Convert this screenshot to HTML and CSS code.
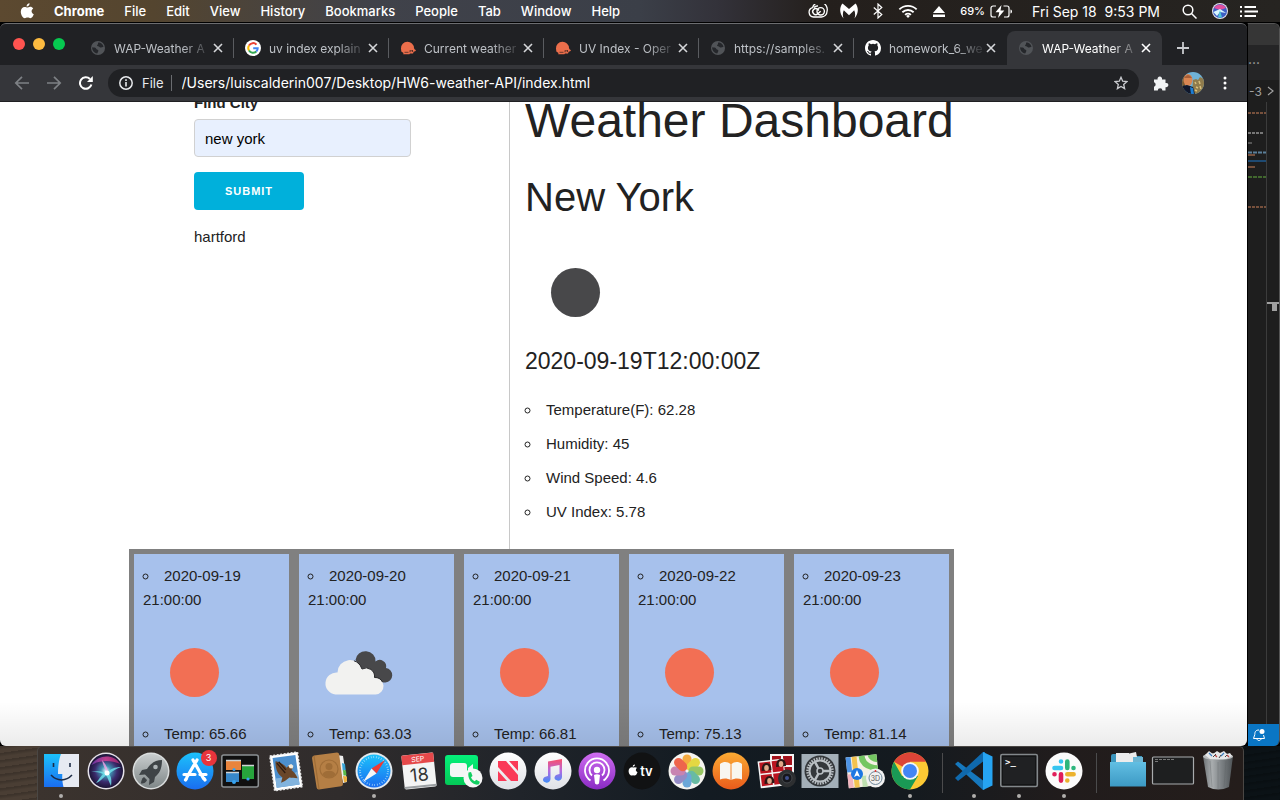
FILE: index.html
```html
<!DOCTYPE html>
<html lang="en">
<head>
<meta charset="utf-8">
<title>WAP-Weather App</title>
<link rel="stylesheet" href="styles.css">
</head>
<body>
<svg class="defs" aria-hidden="true">
  <defs>
    <symbol id="globe" viewBox="0 0 16 16"><circle cx="8" cy="8" r="7" fill="#515458"/><path d="M2.200 7.200c2 .3 3.600 0 4 1.600.3 1 1.300.8 2 1.500.6.700-.3 1.700-1 3.200C4 13 1.800 10 2.200 7.200zM8.200 2.500c-.5 1 .2 1.500-.7 2.200-.8.600-.5 1.500.5 1.500 1.500 0 1.600 1.300 3 1.400 1 0 1.500-.8 2.500-.4C13.300 4.600 11 2.500 8.200 2.500z" fill="#25272b"/></symbol>
    <symbol id="owm" viewBox="0 0 16 14"><path d="M1 7.500A6.500 6.500 0 0 1 14 7c.3 1.300 1 1.700 2 2.300-.5 1-1.300 1.300-2.200 1.200L13 12.500H10l-.6.700H3.200L3.500 12 1.300 10.600z" fill="#eb6e4b"/><path d="M10 9.800h3M10 9.300v2M4.500 11.300h4M12.500 9v2" stroke="#4a2a24" stroke-width=".8"/></symbol>
    <symbol id="close" viewBox="0 0 10 10"><path d="M1 1l8 8M9 1l-8 8" stroke="currentColor" stroke-width="1.600"/></symbol>
    <symbol id="sun" viewBox="0 0 100 100"><circle cx="51.500" cy="50.500" r="24.500" fill="#f26f54"/></symbol>
    <symbol id="moon" viewBox="0 0 100 100"><circle cx="50.500" cy="50.500" r="24.500" fill="#48484a"/></symbol>
    <clipPath id="darkCloud"><path d="M44 36A10 10 0 0 1 66 37 7 7 0 0 1 76.500 44.500 7.300 7.300 0 0 1 76 59.500L50 62z"/></clipPath>
    <symbol id="clouds" viewBox="-1.500 -1 100 100">
      <path d="M46 37A10 9.500 0 0 1 66 38.500 6.500 6.500 0 0 1 76.500 45 7.300 7.300 0 0 1 76 59.500H60z" fill="#48484a"/>
      <path d="M26 71.500A11 11 0 0 1 28 49.500 12.500 12.500 0 0 1 52.500 46 8.500 8.500 0 0 1 65 54.500 8.500 8.500 0 0 1 66 71.500z" fill="#f2f2f0"/>
      <path d="M28 49.500A12.500 12.500 0 0 1 52.500 46 8.500 8.500 0 0 1 65 54.500 8.500 8.500 0 0 1 73 59" fill="none" stroke="#29292b" clip-path="url(#darkCloud)"/>
    </symbol>
    <linearGradient id="gBlue" x2="0" y2="1"><stop stop-color="#1cc2fb"/><stop offset="1" stop-color="#1a6df0"/></linearGradient>
    <linearGradient id="gSilver" x2="0" y2="1"><stop stop-color="#c9cdce"/><stop offset="1" stop-color="#7f8788"/></linearGradient>
    <linearGradient id="gGreen" x2="0" y2="1"><stop stop-color="#05f07a"/><stop offset="1" stop-color="#04c957"/></linearGradient>
    <linearGradient id="gWhite" x2="0" y2="1"><stop stop-color="#ffffff"/><stop offset="1" stop-color="#dfe1e6"/></linearGradient>
    <linearGradient id="gPurple" x2="0" y2="1"><stop stop-color="#cf6df0"/><stop offset="1" stop-color="#8a2bc4"/></linearGradient>
    <linearGradient id="gOrange" x2="0" y2="1"><stop stop-color="#fbab33"/><stop offset="1" stop-color="#ea5b1b"/></linearGradient>
    <linearGradient id="gMusic" x2="0" y2="1"><stop stop-color="#fb4f68"/><stop offset="0.500" stop-color="#b56ae0"/><stop offset="1" stop-color="#3f8cf7"/></linearGradient>
    <linearGradient id="gFolder" x2="0" y2="1"><stop stop-color="#62bfe3"/><stop offset="1" stop-color="#3c99c4"/></linearGradient>
    <linearGradient id="gTrash"><stop stop-color="#6d7275"/><stop offset="0.300" stop-color="#a9adaf"/><stop offset="0.600" stop-color="#7e8386"/><stop offset="1" stop-color="#4f5457"/></linearGradient>
    <radialGradient id="gSiri"><stop stop-color="#dffcff"/><stop offset="0.300" stop-color="#3f8fb0"/><stop offset="0.650" stop-color="#3b2a6c"/><stop offset="1" stop-color="#1b1436"/></radialGradient>
    <linearGradient id="gSiriPink"><stop stop-color="#7a3fc0"/><stop offset="0.500" stop-color="#e8459a"/><stop offset="1" stop-color="#b02a78"/></linearGradient>
  </defs>
</svg>

<header class="menubar">
  <nav class="menus">
    <svg class="apple" viewBox="0 0 14 16" width="14" height="16"><path d="M9.600.3c.1 1.800-1.400 3.300-3 3.200C6.400 1.900 8 .4 9.600.3zM7.300 4.600c.7 0 1.600-.8 2.900-.8 1.100 0 2.300.6 3 1.700-2.400 1.500-2 4.700.6 5.700-.6 1.700-1.900 4-3.400 4-1 0-1.500-.7-2.800-.7s-1.800.7-2.800.7C3 15.200.8 11.800.8 8.700c0-3 1.900-4.700 3.800-4.700 1.200 0 2.100.6 2.700.6z" fill="#fff"/></svg>
    <button class="menu menu-app">Chrome</button>
    <button class="menu">File</button>
    <button class="menu">Edit</button>
    <button class="menu">View</button>
    <button class="menu">History</button>
    <button class="menu">Bookmarks</button>
    <button class="menu">People</button>
    <button class="menu">Tab</button>
    <button class="menu">Window</button>
    <button class="menu">Help</button>
  </nav>
  <div class="status">
    <svg width="20" height="14" viewBox="0 0 20 14" fill="none" stroke="#fff"><path d="M5.500 13A4.800 4.800 0 0 1 4.600 3.600 7 7 0 0 1 19 7.500a5.500 5.500 0 0 1-5.500 5.500z" stroke-width="1.300"/><circle cx="12.700" cy="7.300" r="3.700" stroke-width="1.400"/><path d="M12.700 7.300L9.800 9.800a3 3 0 1 1 0-4.400l1.200 1M6 3.500a4.500 4.500 0 0 1 4-1.500" stroke-width="1.400"/></svg>
    <svg width="18" height="16" viewBox="0 0 18 16"><path d="M2.500.5L9 6l6.500-5.500C18.500 4 19 10 14.500 15.500c1-3.500.8-6-.3-8.200L9 12.200 3.800 7.300C2.700 9.500 2.500 12 3.500 15.500-1 10-.5 4 2.500.5z" fill="#fff"/></svg>
    <svg width="10" height="16" viewBox="0 0 10 16"><path d="M.8 4.500l8 7L5 15V1l3.800 3.500-8 7" fill="none" stroke="#fff" stroke-width="1.200"/></svg>
    <svg width="20" height="15" viewBox="0 0 22 15" fill="none" stroke="#fff" stroke-width="2"><path d="M1.500 5.200a13.500 13.500 0 0 1 19 0M4.800 8.300a9 9 0 0 1 12.400 0M7.800 11.200a4.700 4.700 0 0 1 6.400 0"/><path d="M8.900 12.400L11 14.600l2.100-2.200a3 3 0 0 0-4.200 0z" fill="#fff" stroke="none"/></svg>
    <svg width="12" height="11" viewBox="0 0 12 11"><path d="M6 0l6 7H0zM0 8.500h12V11H0z" fill="#fff"/></svg>
    <span class="battery">69%
      <svg width="23" height="13" viewBox="0 0 23 13"><path d="M6 1H3a2 2 0 0 0-2 2v7a2 2 0 0 0 2 2h3M13.500 1H17a2 2 0 0 1 2 2v7a2 2 0 0 1-2 2h-3" fill="none" stroke="#fff" stroke-width="1.200"/><path d="M11.500 0L5.500 7.300h3.800L8 13l6.300-7.500h-3.800zM20.500 4.500c2 .5 2 3.500 0 4z" fill="#fff"/></svg>
    </span>
    <span class="clock">Fri Sep 18&nbsp; 9:53 PM</span>
    <svg width="15" height="15" viewBox="0 0 15 15" fill="none" stroke="#fff" stroke-width="1.500"><circle cx="6" cy="6" r="4.800"/><path d="M9.500 9.500l5 5"/></svg>
    <svg width="16" height="16" viewBox="0 0 16 16"><circle cx="8" cy="8" r="8" fill="#e8e4ee"/><circle cx="8" cy="8" r="7" fill="#3d5fc4"/><path d="M2 5a7 7 0 0 1 12 0L8 7z" fill="#e04fa0"/><path d="M1.300 9L8 6l6 4-6-1-3 4z" fill="#d8f6ff"/><path d="M8 7l2 7.500H6z" fill="#4ec5d8"/></svg>
    <svg width="18" height="11" viewBox="0 0 18 11"><path d="M4.500 1H16M4.500 5.500H18M4.500 10H16M0 1h2M0 5.500h2M0 10h2" stroke="#fff" stroke-width="2"/></svg>
  </div>
</header>

<div class="workspace">
  <section class="browser">
    <div class="tabstrip">
      <div class="lights"><span class="light red"></span><span class="light yellow"></span><span class="light green"></span></div>
      <div class="tab"><svg class="fav"><use href="#globe"/></svg><span class="tab-title">WAP-Weather A</span><button class="tab-close" aria-label="Close"><svg width="10" height="10"><use href="#close"/></svg></button></div>
      <div class="tab"><svg class="fav" viewBox="0 0 16 16"><circle cx="8" cy="8" r="8" fill="#fff"/><g fill="none" stroke-width="2"><path d="M11.500 4.600A4.700 4.700 0 0 0 4 5.500" stroke="#ea4335"/><path d="M4 5.500a4.700 4.700 0 0 0 0 5" stroke="#fbbc05"/><path d="M4 10.500a4.700 4.700 0 0 0 7.300 1" stroke="#34a853"/><path d="M11.300 11.500A4.700 4.700 0 0 0 12.700 8.200H8.200" stroke="#4285f4"/></g></svg><span class="tab-title">uv index explain</span><button class="tab-close" aria-label="Close"><svg width="10" height="10"><use href="#close"/></svg></button></div>
      <div class="tab"><svg class="fav"><use href="#owm"/></svg><span class="tab-title">Current weather</span><button class="tab-close" aria-label="Close"><svg width="10" height="10"><use href="#close"/></svg></button></div>
      <div class="tab"><svg class="fav"><use href="#owm"/></svg><span class="tab-title">UV Index - Oper</span><button class="tab-close" aria-label="Close"><svg width="10" height="10"><use href="#close"/></svg></button></div>
      <div class="tab"><svg class="fav"><use href="#globe"/></svg><span class="tab-title">https://samples.</span><button class="tab-close" aria-label="Close"><svg width="10" height="10"><use href="#close"/></svg></button></div>
      <div class="tab tab-last"><svg class="fav" viewBox="0 0 16 16"><path d="M8 0C3.580 0 0 3.580 0 8c0 3.540 2.290 6.530 5.470 7.590.4.070.55-.17.55-.38 0-.19-.01-.82-.01-1.490-2.010.37-2.530-.49-2.690-.94-.09-.23-.48-.94-.82-1.130-.28-.15-.68-.52-.01-.53.63-.01 1.080.58 1.230.82.72 1.210 1.870.87 2.330.66.07-.52.28-.87.51-1.070-1.780-.2-3.640-.89-3.640-3.950 0-.87.31-1.590.82-2.150-.08-.2-.36-1.020.08-2.120 0 0 .67-.21 2.200.82a7.420 7.420 0 0 1 4 0c1.530-1.040 2.200-.82 2.200-.82.44 1.100.16 1.920.08 2.120.51.56.82 1.270.82 2.150 0 3.070-1.870 3.750-3.650 3.950.29.25.54.73.54 1.480 0 1.070-.01 1.930-.01 2.200 0 .21.15.46.55.38A8.010 8.010 0 0 0 16 8c0-4.420-3.580-8-8-8z" fill="#fff"/></svg><span class="tab-title">homework_6_we</span><button class="tab-close" aria-label="Close"><svg width="10" height="10"><use href="#close"/></svg></button></div>
      <div class="tab tab-active"><svg class="fav"><use href="#globe"/></svg><span class="tab-title">WAP-Weather A</span><button class="tab-close" aria-label="Close"><svg width="10" height="10"><use href="#close"/></svg></button></div>
      <button class="newtab" aria-label="New tab"><svg width="12" height="12" viewBox="0 0 12 12"><path d="M6 0v12M0 6h12" stroke="#c9cbcf" stroke-width="1.800"/></svg></button>
    </div>
    <div class="toolbar">
      <button class="tool" aria-label="Back"><svg width="16" height="14" viewBox="0 0 16 14"><path d="M15 7H2M8 .8L1.800 7 8 13.200" fill="none" stroke="#7e8185" stroke-width="1.700"/></svg></button>
      <button class="tool" aria-label="Forward"><svg width="16" height="14" viewBox="0 0 16 14"><path d="M1 7h13M8 .8L14.200 7 8 13.200" fill="none" stroke="#7e8185" stroke-width="1.700"/></svg></button>
      <button class="tool" aria-label="Reload"><svg width="16" height="14" viewBox="-1 0 16 14"><path d="M12.400 8.500A5.800 5.800 0 1 1 11 3" fill="none" stroke="#fff" stroke-width="2"/><path d="M13.800 0v6H8z" fill="#fff"/></svg></button>
      <div class="omnibox">
        <svg width="14" height="14" viewBox="0 0 14 14"><circle cx="7" cy="7" r="6.200" fill="none" stroke="#e8eaed" stroke-width="1.500"/><path d="M7 6v4.500M7 3.300V5" stroke="#e8eaed" stroke-width="1.600"/></svg>
        <label class="scheme" for="address">File</label>
        <input class="address" id="address" type="text" value="/Users/luiscalderin007/Desktop/HW6-weather-API/index.html">
        <svg width="14" height="14" viewBox="0 0 14 14"><path d="M7 1.300l1.700 3.900 4.200.4-3.200 2.800.9 4.200L7 10.400l-3.600 2.200.9-4.200L1.100 5.600l4.200-.4z" fill="none" stroke="#c9cbcf" stroke-width="1.300"/></svg>
      </div>
      <svg class="puzzle" width="16" height="16" viewBox="0 0 16 16"><path d="M1 4.500h3.600a2.300 2.300 0 1 1 4.400 0h3.500V8a2.200 2.200 0 1 1 0 4.200V15.500H9.400a2.300 2.300 0 0 0-4.600 0H1v-3.800a2.300 2.300 0 0 0 0-4.400z" fill="#f1f3f4"/></svg>
      <svg class="avatar" width="22" height="22" viewBox="0 0 22 22"><clipPath id="av"><circle cx="11" cy="11" r="11"/></clipPath><g clip-path="url(#av)"><path d="M0 0h22v22H0z" fill="#6fb2d6"/><path d="M11 8l3-1 2 1 2-3 4 2v15H10z" fill="#8f7b4c"/><path d="M13 10l1 2M17 9l1 3M14 15l2 1M18 14l1 3M13 18l2 1" stroke="#d9c07c" stroke-width="1.500" fill="none"/><path d="M0 2h3v20H0z" fill="#7a5a30"/><ellipse cx="6" cy="8" rx="4.500" ry="6" fill="#d88552"/><path d="M2 6q4-6 8 0" fill="#a85f38"/><path d="M0 14l5-1 6 2 2 7H0z" fill="#10172b"/><path d="M8 15l3 1 1 6H9z" fill="#1e7ed2"/></g></svg>
      <svg class="kebab" width="4" height="14" viewBox="0 0 4 14"><circle cx="2" cy="2" r="1.500" fill="#fff"/><circle cx="2" cy="7" r="1.500" fill="#fff"/><circle cx="2" cy="12" r="1.500" fill="#fff"/></svg>
    </div>
    <main class="viewport">
      <div class="columns">
        <form class="search">
          <label class="search-label" for="city">Find City</label>
          <input class="search-input" id="city" type="text" value="new york">
          <button class="search-submit" type="button">SUBMIT</button>
          <div class="history">hartford</div>
        </form>
        <section class="current">
          <h1 class="title">Weather Dashboard</h1>
          <h2 class="city">New York</h2>
          <svg class="weather-icon current-icon"><use href="#moon"/></svg>
          <h4 class="date">2020-09-19T12:00:00Z</h4>
          <ul class="facts">
            <li>Temperature(F): 62.28</li>
            <li>Humidity: 45</li>
            <li>Wind Speed: 4.6</li>
            <li>UV Index: 5.78</li>
          </ul>
        </section>
      </div>
      <section class="forecast">
        <ul class="day"><li>2020-09-19 21:00:00</li><svg class="weather-icon"><use href="#sun"/></svg><li>Temp: 65.66</li></ul>
        <ul class="day"><li>2020-09-20 21:00:00</li><svg class="weather-icon"><use href="#clouds"/></svg><li>Temp: 63.03</li></ul>
        <ul class="day"><li>2020-09-21 21:00:00</li><svg class="weather-icon"><use href="#sun"/></svg><li>Temp: 66.81</li></ul>
        <ul class="day"><li>2020-09-22 21:00:00</li><svg class="weather-icon"><use href="#sun"/></svg><li>Temp: 75.13</li></ul>
        <ul class="day"><li>2020-09-23 21:00:00</li><svg class="weather-icon"><use href="#sun"/></svg><li>Temp: 81.14</li></ul>
      </section>
    </main>
  </section>

  <aside class="editor">
    <div class="editor-title"></div>
    <div class="editor-tabs">···</div>
    <div class="editor-crumbs">-3<svg width="7" height="10" viewBox="0 0 7 10"><path d="M1 1l5 4-5 4" fill="none" stroke="#a0a0a0" stroke-width="1.200"/></svg></div>
    <div class="editor-body">
      <svg width="32" height="210" viewBox="0 0 32 210"><path d="M0 11h18M0 105h18" stroke="#76503c" stroke-width="2" stroke-dasharray="3 1"/><path d="M0 31h15" stroke="#777" stroke-width="2" stroke-dasharray="3 1"/><path d="M0 41h4" stroke="#555" stroke-width="2"/><path d="M0 50.500h18" stroke="#5b7f99" stroke-width="2" stroke-dasharray="4 1"/><path d="M0 53h7M0 65h7" stroke="#76503c" stroke-width="2"/><path d="M0 59h18" stroke="#1e4a72" stroke-width="2"/><path d="M0 75h18" stroke="#41672e" stroke-width="2" stroke-dasharray="4 1"/><path d="M19 201h13" stroke="#a0a0a0" stroke-width="2"/><path d="M24 202h5v7h-5z" fill="#a0a0a0"/></svg>
    </div>
    <div class="editor-status"><svg width="14" height="14" viewBox="0 0 14 14"><path d="M7 2C3.500 2 2.800 4 2.800 6.500L1.500 10.500h11L11.500 7M5 11c.3 2 3.700 2 4 0" fill="none" stroke="#fff" stroke-width="1"/><circle cx="10" cy="3.500" r="2.500" fill="#fff"/></svg></div>
  </aside>
</div>

<footer class="dock-row">
  <div class="dock">
    <div class="app running"><svg viewBox="0 0 38 38"><path d="M2 2h35v33H2z" fill="url(#gBlue)"/><path d="M19 2h18v33H21.500c-1-4-1.500-8-1.200-13H16c0-8 1-15 3-20z" fill="#e6eaf2"/><path d="M11.500 11v4M28 11v4" stroke="#1c2b45" stroke-width="1.600"/><path d="M9 23c6 6.500 15 6.500 21 0" fill="none" stroke="#1c2b45" stroke-width="1.500"/></svg></div>
    <div class="app"><svg viewBox="0 0 38 38"><circle cx="19" cy="19" r="18.500" fill="#e6e3ea"/><circle cx="19" cy="19" r="17" fill="url(#gSiri)"/><path d="M4.500 13C9 4 26 0 33 12 24 8 13 8 4.500 13z" fill="url(#gSiriPink)" opacity=".75"/><path d="M4 20c8-2 13 0 16 1 3-4 8-6 14-6-5 2-9 4-12 7 2 2 3 6 2 12-2-4-3-8-5-11-3 3-6 7-10 8 3-4 5-7 7-9-4-2-7-2-12-2z" fill="#6fe0ea" opacity=".85"/><path d="M15 8c4 4 6 9 6 13-3-3-5-8-6-13z" fill="#f4a4e6" opacity=".8"/><circle cx="20" cy="21" r="2.500" fill="#fff"/></svg></div>
    <div class="app"><svg viewBox="0 0 38 38"><circle cx="19" cy="19" r="18.500" fill="#dadddd"/><circle cx="19" cy="19" r="17" fill="url(#gSilver)"/><path d="M30 8c-7 0-12 4-15 9l-5 1-3 5 6-.5 4.500 4.500L17 33l5-3 1-5c5-4 7-9 7-17z" fill="#3f4447"/><circle cx="23.500" cy="15" r="2.300" fill="#aeb4b6"/><path d="M12 25l3 3c-1 3-4 3.500-6 3.500 0-2 .8-5 3-6.500z" fill="#3f4447"/></svg></div>
    <div class="app"><svg viewBox="0 0 38 38"><circle cx="19" cy="19" r="18.500" fill="url(#gBlue)"/><g stroke="#fff" stroke-width="3.200" stroke-linecap="round"><path d="M17 8l10.500 18.500M21 8L11 25M8 22.500h11M24 22.500h6M10.500 26.500l-1 1.500M28 26.500l1 1.500"/></g></svg><span class="badge">3</span></div>
    <div class="app"><svg viewBox="0 0 38 38"><rect x=".8" y="3" width="36.500" height="32" rx="2" fill="#101010" stroke="#8b9093" stroke-width="1.500"/><path d="M5 8h15v10H5z" fill="#e8843d"/><path d="M5 20h13v10H5z" fill="#3787c9"/><path d="M21 13h12v14H21z" fill="#27a33c"/><path d="M5 8.500h15M5 20.500h13M21 13.500h12" stroke="#cfd3d5" stroke-width="1.500"/><circle cx="13" cy="17.500" r="1.500" fill="#36a3f0"/><circle cx="13" cy="30" r="2" fill="#36a3f0"/><circle cx="27" cy="27" r="1.600" fill="#36a3f0"/></svg></div>
    <div class="app"><svg viewBox="0 0 38 38"><g transform="rotate(-8 19 19)"><rect x="6" y="2" width="28" height="35" fill="#fff" stroke="#e8e8e8" stroke-width="1.500" stroke-dasharray="2 1.500"/><path d="M8.500 4.500h23v30h-23z" fill="#4c8fce"/><path d="M8.500 25q12 1 23-4v13.500h-23z" fill="#82b3dd"/><path d="M11 8c3 1 8 4 10 8l3-2 3 1 .5 2-2 2c2 2 4 5 5 9-3-1-6-1-8-2l-5 3-4 1 2-5c-4-3-6-10-4.500-17z" fill="#6a4629"/><path d="M12 10l7 11M14 9l6 9" stroke="#2e1c12" stroke-width="1.300"/><path d="M23 14l3-1 2 2-1 2.500-3-.5z" fill="#f3ead9"/></g></svg></div>
    <div class="app"><svg viewBox="0 0 38 38"><path d="M27 3l6 1 4 26-4 1z" fill="#eee"/><path d="M32 11l3 1 .7 6-3 .5z" fill="#3aa6d8"/><path d="M33 18l3 .5.500 5h-3z" fill="#58b947"/><path d="M33 24l4 .5v5l-3 1z" fill="#eeb23e"/><path d="M2 6Q2 4 4 3.500L27 .5q2 0 2.200 2L33 32q0 2-2 2.300L9 37.500q-2 .2-2.400-2z" fill="#b57f45"/><path d="M4 4l5 33" stroke="#9f6d37" stroke-width="1.200"/><circle cx="19" cy="17" r="9" fill="none" stroke="#9f6d37" stroke-width="1.200"/><circle cx="19" cy="14.500" r="3.500" fill="#9f6d37"/><path d="M12.500 22c2-4.500 11-4.500 13 0-3 5-10 5-13 0z" fill="#9f6d37"/></svg></div>
    <div class="app running"><svg viewBox="0 0 38 38"><circle cx="19" cy="19" r="18.500" fill="#e3e8ec"/><circle cx="19" cy="19" r="16.500" fill="url(#gBlue)"/><circle cx="19" cy="19" r="14" fill="none" stroke="#bfe6fb" stroke-width="2" stroke-dasharray=".6 2"/><path d="M30 8L16.500 16.500l5 5z" fill="#ee3b35"/><path d="M8 30l8.500-13.500 5 5z" fill="#f6f6f6"/></svg></div>
    <div class="app"><svg viewBox="0 0 38 38"><g transform="rotate(-6 19 19)"><rect x="3" y="2" width="32" height="34" rx="1.500" fill="#f4f4f4"/><path d="M3 2h32v9.500H3z" fill="#e5484a"/><path d="M3 34.500h32" stroke="#9b9fa2" stroke-width="2"/><text class="cal-month" x="19" y="9.500">SEP</text><text class="cal-day" x="19" y="29">18</text></g></svg></div>
    <div class="app"><svg viewBox="0 0 38 38"><rect x="1" y="3" width="33" height="30" rx="3" fill="url(#gGreen)"/><rect x="6" y="11" width="17" height="14" rx="3" fill="#f4f6f5"/><path d="M24 16l5-4v12l-5-4z" fill="#f4f6f5"/><circle cx="29" cy="26" r="9.500" fill="#f7f7f7"/><path d="M24.500 20.500l2.500-.5 1.500 4-1.500 1.200c.7 1.800 2 3.200 3.800 4l1.400-1.400 3.600 2-.8 2.500c-6 2-12-5.500-10.500-11.800z" fill="#13cf62"/></svg></div>
    <div class="app"><svg viewBox="0 0 38 38"><circle cx="19" cy="19" r="18.500" fill="url(#gWhite)"/><path d="M9 9h8l12 14v6h-7L9 15z" fill="#fa3a58"/><path d="M20 9h9v10zM9 19v10h9z" fill="#fa3a58"/></svg></div>
    <div class="app"><svg viewBox="0 0 38 38"><circle cx="19" cy="19" r="18.500" fill="url(#gWhite)"/><path d="M14 9.500L28 7v18c0 5-8 4.500-7.500.5.300-2.500 2.500-3 5-3.500V13l-9 1.800V27c0 5-8 4.500-7.500.5.300-2.500 2.500-3 5-3.500z" fill="url(#gMusic)"/></svg></div>
    <div class="app"><svg viewBox="0 0 38 38"><circle cx="19" cy="19" r="18.500" fill="url(#gPurple)"/><g fill="none" stroke="#fff" stroke-width="1.800"><path d="M12.500 28.500a12 12 0 1 1 13 0M14 23.500a7.500 7.500 0 1 1 10 0"/></g><circle cx="19" cy="18" r="3.200" fill="#fff"/><path d="M16 23q3-1.500 6 0l-1 8.500q-2 2-4 0z" fill="#fff"/></svg></div>
    <div class="app"><svg viewBox="0 0 38 38"><circle cx="19" cy="19" r="18.500" fill="#111213"/><path d="M12 12.500c.2 1.200-1 2.200-2.200 2.200-.2-1.300 1-2.200 2.200-2.200zM10 15.500c1 0 2-1 4 .3-1.800 1.300-1.500 3.600.5 4.500-1 2.600-2 4-4.500 2.900-3 1.300-4.400-2-4.400-4.200 0-3 2.600-4.300 4.400-3.500z" fill="#fff"/><text class="tv" x="23.500" y="24">tv</text></svg></div>
    <div class="app"><svg viewBox="0 0 38 38"><circle cx="19" cy="19" r="18.500" fill="#f5f4f0"/><g opacity=".9"><rect x="14.500" y="2.500" width="9" height="15" rx="4.500" fill="#f6a22d"/><rect x="14.500" y="2.500" width="9" height="15" rx="4.500" fill="#e3d630" transform="rotate(45 19 19)"/><rect x="14.500" y="2.500" width="9" height="15" rx="4.500" fill="#8fc255" transform="rotate(90 19 19)"/><rect x="14.500" y="2.500" width="9" height="15" rx="4.500" fill="#59b59a" transform="rotate(135 19 19)"/><rect x="14.500" y="2.500" width="9" height="15" rx="4.500" fill="#5d9fd6" transform="rotate(180 19 19)"/><rect x="14.500" y="2.500" width="9" height="15" rx="4.500" fill="#8a80c2" transform="rotate(225 19 19)"/><rect x="14.500" y="2.500" width="9" height="15" rx="4.500" fill="#c477ab" transform="rotate(270 19 19)"/><rect x="14.500" y="2.500" width="9" height="15" rx="4.500" fill="#ee563b" transform="rotate(315 19 19)"/></g></svg></div>
    <div class="app"><svg viewBox="0 0 38 38"><circle cx="19" cy="19" r="18.500" fill="url(#gOrange)"/><path d="M8 12c4-3 8-2 10.500 0v16c-3-2-7-2-10.500-.5zM30 12c-4-3-8-2-10.500 0v16c3-2 7-2 10.500-.5z" fill="#f8f6f0"/></svg></div>
    <div class="app"><svg viewBox="0 0 38 38"><path d="M13 2h24v23H13z" fill="#f5f5f5"/><path d="M15 4h9v9h-9zM26 4h9v9h-9zM26 15h9v9h-9z" fill="#a5121c"/><g transform="rotate(-7 14 21)"><path d="M2 8h26v27H2z" fill="#f5f5f5"/><path d="M3.500 9.500h11v11h-11zM16 9.500h11v11H16zM3.500 22h11v11h-11zM16 22h11v11H16z" fill="#b9141f"/></g><path d="M4.500 19q0-8 5-8t5 7zM19 15q0-8 5-8t5 7zM7.500 32q0-8 5-8t5 7z" fill="#2b1715"/><g fill="#e0a888"><ellipse cx="9.500" cy="16" rx="2.300" ry="3"/><ellipse cx="24" cy="12" rx="2.300" ry="3"/><ellipse cx="12.500" cy="29" rx="2.300" ry="3"/></g><circle cx="30" cy="26.500" r="9" fill="#2d2f31"/><circle cx="30" cy="26" r="5" fill="#15161b" stroke="#44484c"/><circle cx="30" cy="26" r="2" fill="#3e4f8c"/></svg></div>
    <div class="app"><svg viewBox="0 0 38 38"><rect x=".5" y="2" width="37" height="34" fill="#a3afb8"/><circle cx="19" cy="19" r="15.500" fill="#34383b"/><circle cx="19" cy="19" r="12.500" fill="none" stroke="#b9bfc3" stroke-width="2.500" stroke-dasharray="1.500 1.100"/><circle cx="19" cy="19" r="10.500" fill="none" stroke="#b9bfc3" stroke-width="2"/><circle cx="19" cy="19" r="3" fill="none" stroke="#b9bfc3" stroke-width="1.500"/><path d="M22 19h7M17.500 16.500L14 10M17.500 21.500L14 28" stroke="#b9bfc3" stroke-width="2.500"/></svg></div>
    <div class="app"><svg viewBox="0 0 38 38"><g transform="rotate(-6 15 18)"><path d="M1 4h31v31H1z" fill="#f4f0e4"/><path d="M1 4h5v15H1z" fill="#4e95e6"/><path d="M7 4h5v31H7z" fill="#f2c24f"/><path d="M14 4h6q0 9 12 11v6Q14 18 14 4zM23 4h9v8Q24 10 23 4z" fill="#74c662"/><path d="M1 21h5v14H1z" fill="#f1b4be"/><path d="M15 24h5v11h-5z" fill="#bfe0b0"/></g><circle cx="11" cy="22" r="6" fill="#1d77e3"/><path d="M11 18l3 7-3-1.500L8 25z" fill="#fff"/><circle cx="29.500" cy="26" r="9.500" fill="#f1f1f1"/><circle cx="29.500" cy="26" r="6.500" fill="none" stroke="#6e8799"/><text class="map-mode" x="29.500" y="28.500">3D</text><path d="M29.500 18v2" stroke="#e23b35" stroke-width="1.500"/></svg></div>
    <div class="app running"><svg viewBox="0 0 38 38"><circle cx="19" cy="19" r="18.500" fill="#fcc934"/><path d="M19 19L3 9.800A18.500 18.500 0 0 1 35 9.800H19z" fill="#db4437"/><path d="M3 9.800A18.500 18.500 0 0 0 19 37.500L27 24 11 24z" fill="#1a9a55"/><circle cx="19" cy="19" r="8.800" fill="#f6f6f6"/><circle cx="19" cy="19" r="7" fill="#4285f4"/></svg></div>
    <div class="divider"></div>
    <div class="app running"><svg viewBox="0 0 38 38"><path d="M0 12l3-2.500L30 30v7L28 38z" fill="#1678bd"/><path d="M0 26l3 3L30 8V0h-2z" fill="#0f69ad"/><path d="M28 0l9.500 4.500v29L28 38z" fill="#26a4f2"/></svg></div>
    <div class="app running"><svg viewBox="0 0 38 38"><rect x=".8" y="2.500" width="36.500" height="32" rx="1.500" fill="#141516" stroke="#83888b" stroke-width="1.600"/><path d="M3 5h32v27H3z" fill="#202123"/><text class="prompt" x="5" y="13">&gt;_</text></svg></div>
    <div class="app running"><svg viewBox="0 0 38 38"><circle cx="19" cy="19" r="18.500" fill="#fbfbfb"/><g stroke-width="4.600" stroke-linecap="round"><path d="M16 9.500h0M9.500 16H16" stroke="#36c5f0"/><path d="M22.300 9.500V16M28.500 16h0" stroke="#2eb67d"/><path d="M22.300 22.300h6.300M22.300 28.500h0" stroke="#ecb22e"/><path d="M16 22.300v6.300M9.500 22.300h0" stroke="#e01e5a"/></g></svg></div>
    <div class="divider"></div>
    <div class="app"><svg viewBox="0 0 38 38"><path d="M2 4q0-2 2-2h9l2 2h18v8H2z" fill="#3c95bc"/><path d="M7 1h13v10H7zM18 2l9-2 2 10-9 2z" fill="#ececec"/><path d="M24 5h10v6H24z" fill="#6bb5d3"/><path d="M1 10h36v24.500H1z" fill="url(#gFolder)"/></svg></div>
    <div class="app"><svg viewBox="0 0 38 38"><rect x="-1.500" y="5" width="41" height="27" rx="1" fill="#1e1f20" stroke="#a8abad" stroke-width="1.200"/><path d="M1 7.500h20M1 9.500h4" stroke="#777" stroke-width="1" stroke-dasharray="3 1"/></svg></div>
    <div class="app"><svg viewBox="0 0 38 38"><path d="M4 4h30l-4 31q-11 5-21 0z" fill="url(#gTrash)"/><ellipse cx="19" cy="4.500" rx="15" ry="3.500" fill="#b9bcbe"/><path d="M6 3l4-4 4 3 4-3 3 2 4-2 3 3 3-1 2 3-6 3H11z" fill="#e6e7e8"/><path d="M10 1l3 3M22 4l3-3" stroke="#3a7cc0" stroke-width="1.200"/><path d="M16 3l2 2M28 3l2 2" stroke="#b44" stroke-width="1.200"/><path d="M14 5l3-3M20 6l2-3M26 5l2-2" stroke="#444" stroke-width="1"/><path d="M11 9l2 26M19 10v27M27 9l-2 26" stroke="#5c6163" opacity=".3"/></svg></div>
  </div>
</footer>
</body>
</html>
```
FILE: styles.css
```css
* { box-sizing: border-box; }

body {
  margin: 0;
  height: 100vh;
  display: grid;
  grid-template-rows: 23px minmax(0, 1fr) 54px;
  overflow: hidden;
  background: linear-gradient(90deg, #5a4a33 0%, #3c3b3a 40%, #0c1418 100%);
  font-family: Inter, "Liberation Sans", sans-serif;
}

button { border: 0; padding: 0; margin: 0; background: none; font: inherit; color: inherit; }
svg { display: block; flex: none; }
.defs { position: absolute; width: 0; height: 0; }

/* Menu bar */
.menubar {
  display: flex;
  align-items: center;
  justify-content: space-between;
  padding: 0 22px 0 20px;
  border-bottom: 1px solid #000;
  background: linear-gradient(90deg, #5c4930 0%, #54452f 12%, #40424a 29%, #3b3f48 50%, #33323a 56%, #241f1c 64%, #262421 100%);
  color: #fff;
  font-size: 13px;
  font-weight: 500;
  white-space: nowrap;
}
.menus { display: flex; align-items: center; gap: 20px; }
.menu-app { font-weight: 700; }
.status { display: flex; align-items: center; gap: 15px; }
.status > svg:nth-child(2) { margin-left: -3px; }
.battery { display: flex; align-items: center; gap: 5px; font-size: 11px; }
.clock { margin: 0 7px 0 4px; font-size: 14px; font-weight: 400; }
.status > svg:last-child { margin-left: -3px; }

/* Windows */
.workspace { display: flex; min-height: 0; background: #000; }
.browser {
  flex: 1;
  min-width: 0;
  display: flex;
  flex-direction: column;
  overflow: hidden;
  border-top: 1px solid #6c6d70;
  border-radius: 6px;
  background: #202124;
}

.tabstrip { display: flex; align-items: flex-end; height: 41px; flex: none; padding-left: 13px; color: #bdc1c6; }
.lights { display: flex; gap: 8px; width: 66px; height: 27px; flex: none; }
.light { width: 12px; height: 12px; border-radius: 50%; }
.red { background: #ff5450; }
.yellow { background: #fdbb40; }
.green { background: #06c950; }
.tab {
  display: flex;
  align-items: center;
  flex: 0 1 155px;
  min-width: 0;
  height: 34px;
  padding: 0 11px;
  border-radius: 8px 8px 0 0;
  font-size: 12px;
  background: linear-gradient(#5a5c60, #5a5c60) right center / 1px 20px no-repeat;
}
.tab-last { flex-basis: 153px; background: none; }
.tab-active { background: #35363a; color: #fff; }
.fav { width: 16px; height: 16px; }
.tab-title {
  flex: 1;
  margin: 0 2px 0 8px;
  white-space: nowrap;
  mask-image: linear-gradient(90deg, #000 70%, rgba(0, 0, 0, 0.2) 95%);
}
.tab-close { color: #d5d7da; }
.tab-active .tab-close { color: #fff; }
.newtab { display: flex; align-items: center; height: 34px; margin-left: 15px; }

.toolbar {
  display: flex;
  align-items: center;
  height: 37px;
  flex: none;
  padding: 0 20px 1px 14px;
  border-bottom: 1px solid #1f1f22;
  background: #35363a;
  color: #fff;
}
.tool { display: flex; margin-right: 16px; }
.tool + .tool + .tool { margin-right: 14px; }
.omnibox {
  display: flex;
  align-items: center;
  flex: 1;
  height: 28px;
  padding: 0 11px;
  margin-right: 14px;
  border-radius: 14px;
  background: #202124;
  font-size: 14px;
}
.scheme { padding-right: 7px; margin: 0 10px 0 9px; border-right: 1px solid #6a6c70; color: #e8eaed; font-size: 13px; }
.address { flex: 1; min-width: 0; padding: 0; border: 0; outline: 0; background: none; color: #fff; font: inherit; }
.puzzle { margin-right: 13px; }
.avatar { margin-right: 19px; }

/* Web page */
.viewport {
  position: relative;
  flex: 1;
  min-height: 0;
  overflow: hidden;
  background: #fff;
  color: #222;
  font: 15px/24px "Liberation Sans", Arial, sans-serif;
}
.viewport::after {
  content: "";
  position: absolute;
  inset: auto 0 0 0;
  height: 44px;
  background: linear-gradient(rgba(0, 0, 0, 0), rgba(0, 0, 0, 0.08));
}
.columns { display: grid; grid-template-columns: 510fr 737fr; margin-top: -11px; }
.search {
  display: flex;
  flex-direction: column;
  align-items: flex-start;
  padding: 0 98px 0 194px;
  border-right: 1px solid #c8c8c8;
}
.search-label { margin-bottom: 4px; font-weight: 700; }
.search-input {
  width: 100%;
  height: 38px;
  margin-bottom: 15px;
  padding: 6px 10px;
  border: 1px solid #d1d1d1;
  border-radius: 4px;
  background: #e8f0fe;
  color: #000;
  font: inherit;
}
.search-submit {
  width: 110px;
  height: 38px;
  margin-bottom: 15px;
  border-radius: 4px;
  background: #00b0db;
  color: #fff;
  font-size: 11px;
  font-weight: 700;
  letter-spacing: 1px;
}
.current { padding: 0 15px 15px; }
.title, .city, .date { margin: 0; font-weight: 400; }
.title { margin-bottom: 21px; font-size: 48px; line-height: 60px; }
.city { margin-bottom: 20px; font-size: 40px; line-height: 50px; }
.date { margin: 4px 0 22px; font-size: 23px; line-height: 30px; }
.weather-icon { width: 100px; height: 100px; }
.facts, .day { margin: 0; padding: 0; list-style: circle inside; }
.facts li, .day li { margin-bottom: 10px; }

.forecast { display: grid; grid-template-columns: repeat(5, minmax(0, 165fr)); margin: 0 293px 0 129px; }
.day { min-height: 240px; padding: 10px 9px; border: 5px solid #808080; background: #a7c1ec; }

/* Editor window behind the browser */
.editor {
  display: flex;
  flex-direction: column;
  width: 33px;
  flex: none;
  border-top: 1px solid #555;
  border-right: 1px solid #555;
  border-left: 1px solid #000;
  border-radius: 0 6px 6px 0;
  overflow: hidden;
  background: #1e1e1e;
  color: #a0a0a0;
  font-size: 12px;
}
.editor-title { height: 21px; background: #363636; }
.editor-tabs { height: 35px; line-height: 35px; background: #252526; font-size: 14px; }
.editor-crumbs { display: flex; align-items: center; justify-content: space-between; height: 22px; padding: 0 5px 0 1px; }
.editor-body {
  flex: 1;
  min-height: 0;
  overflow: hidden;
  background: linear-gradient(#3c3c3c, #3c3c3c) 18px 0 / 1px 100% no-repeat;
}
.editor-status { display: flex; align-items: center; height: 22px; padding-left: 4px; background: #0a76c4; }

/* Dock */
.dock-row {
  padding: 0 36px 0 37px;
  background:
    repeating-linear-gradient(172deg, rgba(0, 0, 0, 0.18) 0 1px, rgba(0, 0, 0, 0) 4px 7px),
    linear-gradient(90deg, #4a3e34 0 40px, #0b1216 60px);
}
.dock {
  display: flex;
  height: 54px;
  padding: 0 3px 0 1px;
  border: 1px solid #4a4744;
  border-bottom: 0;
  border-radius: 5px 5px 0 0;
  background: linear-gradient(90deg, #3b332e 0%, #302c2c 25%, #20242a 40%, #131b22 55%, #141a1f 72%, #211c1c 85%, #241d1b 100%);
}
.app { position: relative; display: flex; flex: 1; justify-content: center; padding-top: 5px; min-width: 0; }
.app svg { width: 38px; height: 38px; overflow: visible; }
.running::after {
  content: "";
  position: absolute;
  left: 50%;
  bottom: 2px;
  width: 4px;
  height: 4px;
  margin-left: -2px;
  border-radius: 50%;
  background: #b0aeac;
}
.badge {
  position: absolute;
  top: 3px;
  right: 1px;
  width: 16px;
  height: 16px;
  border-radius: 50%;
  background: #e8343c;
  color: #fff;
  font-size: 9px;
  line-height: 16px;
  text-align: center;
}
.divider { width: 1px; height: 40px; margin: 6px 9px 0 10px; background: #4b4b4c; }
.cal-month { fill: #fff; font-size: 7px; text-anchor: middle; }
.cal-day { fill: #333; font-size: 18px; text-anchor: middle; }
.tv { fill: #fff; font-size: 13px; font-weight: 600; text-anchor: middle; }
.map-mode { fill: #555; font-size: 7px; text-anchor: middle; }
.prompt { fill: #fff; font: 700 9px "DejaVu Sans Mono", monospace; }
```
